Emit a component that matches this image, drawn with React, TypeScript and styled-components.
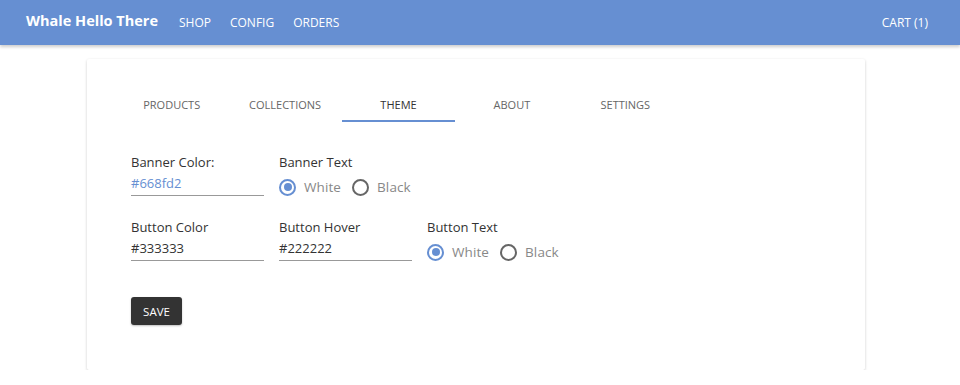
import React, { useState } from "react";
import styled, { createGlobalStyle } from "styled-components";

const Global = createGlobalStyle`
  html, body { margin: 0; padding: 0; background: #fff; }
  body { font-family: "Open Sans", "Noto Sans", sans-serif; color: #333; }
  * { box-sizing: border-box; }
`;

const Header = styled.header`
  height: 45px;
  background: #668fd2;
  box-shadow: 0 2px 3px rgba(0,0,0,0.2);
  display: flex;
  align-items: center;
  padding: 0 32px 0 26px;
  color: #fff;
`;

const Brand = styled.div`
  font-size: 14.5px;
  font-weight: 700;
  margin-right: 21px;
  margin-top: -4px;
`;

const NavLink = styled.a<{ $last?: boolean }>`
  font-size: 12px;
  margin-right: ${(p) => (p.$last ? "0" : "19px")};
  color: #fff;
  text-decoration: none;
`;

const Spacer = styled.div`
  flex: 1;
`;

const Main = styled.main`
  padding: 14px 95px 0 87px;
`;

const Card = styled.section`
  background: #fff;
  box-shadow: 0 1px 3px rgba(0,0,0,0.2);
  border-radius: 2px;
  height: 311px;
  padding: 30px 28px;
`;

const Tabs = styled.nav`
  display: flex;
  width: 567px;
`;

const Tab = styled.div<{ $active?: boolean }>`
  flex: 1;
  height: 33px;
  display: flex;
  align-items: center;
  justify-content: center;
  font-size: 11px;
  color: ${(p) => (p.$active ? "#333" : "#666")};
  border-bottom: 2px solid ${(p) => (p.$active ? "#668fd2" : "transparent")};
`;

const Form = styled.div`
  padding: 31px 16px 0;
  display: flex;
  flex-direction: column;
  gap: 22px;
`;

const Row = styled.div`
  display: flex;
  gap: 15px;
`;

const Field = styled.div`
  width: 133px;
  display: flex;
  flex-direction: column;
`;

const Label = styled.div`
  font-size: 13px;
  color: #333;
  height: 18px;
  line-height: 18px;
`;

const Input = styled.div<{ $accent?: boolean }>`
  height: 25px;
  line-height: 25px;
  font-size: 13px;
  color: ${(p) => (p.$accent ? "#668fd2" : "#333")};
  border-bottom: 1px solid #999;
`;

const RadioGroup = styled.div`
  display: flex;
  align-items: center;
  height: 25px;
  padding-top: 7px;
  gap: 11px;
`;

const RadioItem = styled.label`
  display: flex;
  align-items: center;
  gap: 8px;
  font-size: 13.5px;
  letter-spacing: 0.1px;
  color: #888;
  white-space: nowrap;
`;

const Circle = styled.span<{ $on?: boolean }>`
  width: 17px;
  height: 17px;
  border-radius: 50%;
  border: 2px solid ${(p) => (p.$on ? "#668fd2" : "#666")};
  display: flex;
  align-items: center;
  justify-content: center;
  &::after {
    content: "";
    width: 8px;
    height: 8px;
    border-radius: 50%;
    background: ${(p) => (p.$on ? "#668fd2" : "transparent")};
  }
`;

const SaveButton = styled.button`
  margin-top: 14px;
  width: 51px;
  height: 28px;
  background: #333;
  color: #fff;
  border: none;
  border-radius: 3px;
  font-family: inherit;
  font-size: 11.5px;
  box-shadow: 0 1px 2px rgba(0,0,0,0.25);
  padding: 0;
  align-self: flex-start;
`;

function Radios({ value }: { value: string }) {
  return (
    <RadioGroup>
      <RadioItem><Circle $on={value === "White"} />White</RadioItem>
      <RadioItem><Circle $on={value === "Black"} />Black</RadioItem>
    </RadioGroup>
  );
}

export default function App() {
  const [tab] = useState("THEME");
  const tabs = ["PRODUCTS", "COLLECTIONS", "THEME", "ABOUT", "SETTINGS"];
  return (
    <>
      <Global />
      <Header>
        <Brand>Whale Hello There</Brand>
        <NavLink>SHOP</NavLink>
        <NavLink>CONFIG</NavLink>
        <NavLink>ORDERS</NavLink>
        <Spacer />
        <NavLink as="span" $last>CART (1)</NavLink>
      </Header>
      <Main>
        <Card>
          <Tabs>
            {tabs.map((t) => (
              <Tab key={t} $active={t === tab}>{t}</Tab>
            ))}
          </Tabs>
          <Form>
            <Row>
              <Field>
                <Label>Banner Color:</Label>
                <Input $accent>#668fd2</Input>
              </Field>
              <Field>
                <Label>Banner Text</Label>
                <Radios value="White" />
              </Field>
            </Row>
            <Row>
              <Field>
                <Label>Button Color</Label>
                <Input>#333333</Input>
              </Field>
              <Field>
                <Label>Button Hover</Label>
                <Input>#222222</Input>
              </Field>
              <Field>
                <Label>Button Text</Label>
                <Radios value="White" />
              </Field>
            </Row>
            <SaveButton>SAVE</SaveButton>
          </Form>
        </Card>
      </Main>
    </>
  );
}
